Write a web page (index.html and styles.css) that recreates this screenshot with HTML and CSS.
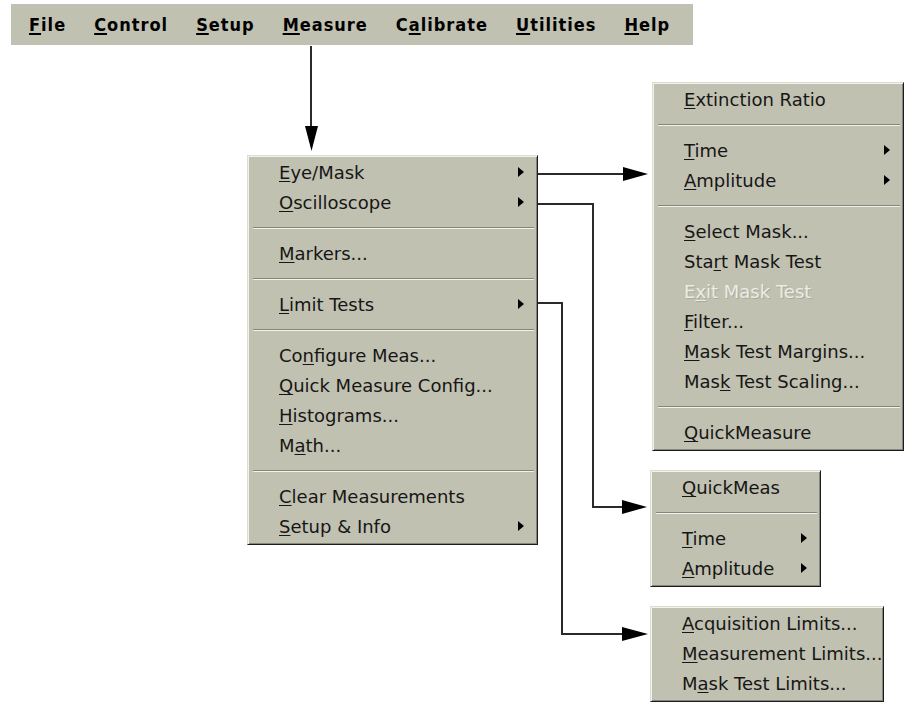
FILE: index.html
```html
<!DOCTYPE html>
<html>
<head>
<meta charset="utf-8">
<title>Measure menu</title>
<link rel="stylesheet" href="styles.css">
</head>
<body>
<div class="canvas">
  <nav class="menubar">
    <span class="top"><u>F</u>ile</span>
    <span class="top"><u>C</u>ontrol</span>
    <span class="top"><u>S</u>etup</span>
    <span class="top"><u>M</u>easure</span>
    <span class="top">C<u>a</u>librate</span>
    <span class="top"><u>U</u>tilities</span>
    <span class="top"><u>H</u>elp</span>
  </nav>

  <svg class="wires" width="906" height="703" viewBox="0 0 906 703">
    <g fill="none" stroke="#2a2a2a" stroke-width="2">
      <path d="M311 46 V128"/>
      <path d="M538 174 H626"/>
      <path d="M538 204 H593 V507 H626"/>
      <path d="M538 303 H562 V634 H626"/>
    </g>
    <g fill="#000">
      <polygon points="305,126 318,126 311.5,151"/>
      <polygon points="623,167 648,174 623,181"/>
      <polygon points="622,500 647,507 622,514"/>
      <polygon points="622,627 648,634 622,641"/>
    </g>
  </svg>

  <div class="menu main-menu">
    <div class="item"><span><u>E</u>ye/Mask</span><i class="sub"></i></div>
    <div class="item"><span><u>O</u>scilloscope</span><i class="sub"></i></div>
    <div class="sep"></div>
    <div class="item"><span><u>M</u>arkers...</span></div>
    <div class="sep"></div>
    <div class="item"><span><u>L</u>imit Tests</span><i class="sub"></i></div>
    <div class="sep"></div>
    <div class="item"><span>Co<u>n</u>figure Meas...</span></div>
    <div class="item"><span><u>Q</u>uick Measure Config...</span></div>
    <div class="item"><span><u>H</u>istograms...</span></div>
    <div class="item"><span>M<u>a</u>th...</span></div>
    <div class="sep"></div>
    <div class="item"><span><u>C</u>lear Measurements</span></div>
    <div class="item"><span><u>S</u>etup &amp; Info</span><i class="sub"></i></div>
  </div>

  <div class="menu eye-menu">
    <div class="item"><span><u>E</u>xtinction Ratio</span></div>
    <div class="sep"></div>
    <div class="item"><span><u>T</u>ime</span><i class="sub"></i></div>
    <div class="item"><span><u>A</u>mplitude</span><i class="sub"></i></div>
    <div class="sep"></div>
    <div class="item"><span><u>S</u>elect Mask...</span></div>
    <div class="item"><span>Sta<u>r</u>t Mask Test</span></div>
    <div class="item disabled"><span>E<u>x</u>it Mask Test</span></div>
    <div class="item"><span><u>F</u>ilter...</span></div>
    <div class="item"><span><u>M</u>ask Test Margins...</span></div>
    <div class="item"><span>Mas<u>k</u> Test Scaling...</span></div>
    <div class="sep"></div>
    <div class="item"><span><u>Q</u>uickMeasure</span></div>
  </div>

  <div class="menu scope-menu">
    <div class="item"><span><u>Q</u>uickMeas</span></div>
    <div class="sep"></div>
    <div class="item"><span><u>T</u>ime</span><i class="sub"></i></div>
    <div class="item"><span><u>A</u>mplitude</span><i class="sub"></i></div>
  </div>

  <div class="menu limit-menu">
    <div class="item"><span><u>A</u>cquisition Limits...</span></div>
    <div class="item"><span><u>M</u>easurement Limits...</span></div>
    <div class="item"><span>M<u>a</u>sk Test Limits...</span></div>
  </div>
</div>
</body>
</html>
```

FILE: styles.css
```css
html, body {
  margin: 0;
  padding: 0;
  background: #ffffff;
}

body {
  width: 906px;
  height: 703px;
  overflow: hidden;
}

.canvas {
  position: relative;
  width: 906px;
  height: 703px;
  padding-top: 4px;
  box-sizing: border-box;
}

.menubar {
  margin-left: 11px;
  width: 682px;
  height: 41px;
  background: #c1c1b1;
  display: flex;
  align-items: center;
  gap: 28px;
  padding-left: 18px;
  box-sizing: border-box;
  font-family: "DejaVu Sans Condensed", "DejaVu Sans", sans-serif;
  font-stretch: condensed;
  font-weight: bold;
  font-size: 18px;
  letter-spacing: 1px;
  color: #000;
}

.top u {
  text-decoration-thickness: 2px;
  text-underline-offset: 2px;
}

.wires {
  position: absolute;
  left: 0;
  top: 0;
  pointer-events: none;
}

.menu {
  position: absolute;
  background: #c1c1b1;
  border: 1px solid;
  border-color: #dcdcd2 #1c1c1c #1c1c1c #dcdcd2;
  box-shadow: inset 1px 1px 0 #f2f2ea, inset -1px -1px 0 #85857a;
  padding: 2px 0;
  font-family: "DejaVu Sans", sans-serif;
  font-size: 18px;
  color: #161616;
  box-sizing: border-box;
}

.main-menu {
  left: 247px;
  top: 155px;
  width: 291px;
}

.eye-menu {
  left: 652px;
  top: 82px;
  width: 252px;
}

.scope-menu {
  left: 650px;
  top: 470px;
  width: 171px;
}

.limit-menu {
  left: 650px;
  top: 606px;
  width: 234px;
}

.item {
  height: 30px;
  line-height: 30px;
  padding-left: 31px;
  display: flex;
  align-items: center;
  white-space: nowrap;
}

.item u {
  text-decoration-thickness: 1px;
  text-underline-offset: 2px;
}

.item.disabled {
  color: #ecece4;
  text-shadow: 1px 1px 0 #a9a99b;
}

.sub {
  margin-left: auto;
  margin-right: 13px;
  width: 0;
  height: 0;
  border-left: 6px solid #000;
  border-top: 5.5px solid transparent;
  border-bottom: 5.5px solid transparent;
  margin-top: -2px;
}

.sep {
  height: 0;
  margin: 9px 3px 10px 5px;
  border-top: 1px solid #85857a;
  border-bottom: 1px solid #f2f2ea;
}
```
